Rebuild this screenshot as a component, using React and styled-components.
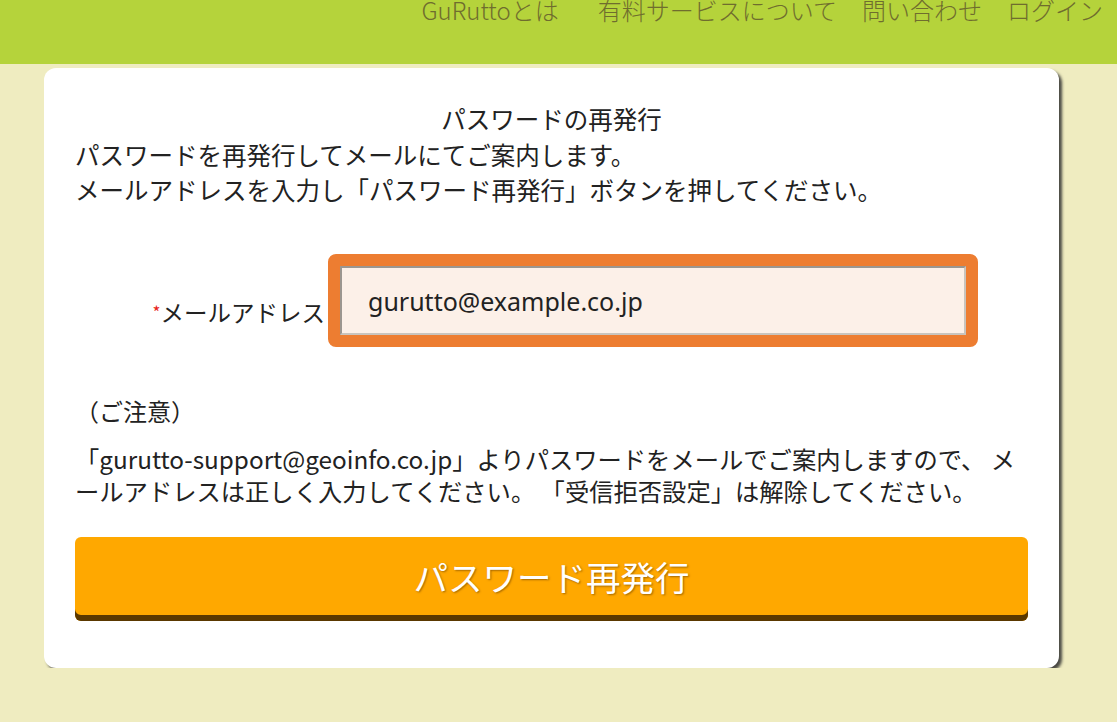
import styled, { createGlobalStyle } from 'styled-components'

const GlobalStyle = createGlobalStyle`
  html, body {
    margin: 0;
    padding: 0;
    background: #efecc0;
    font-family: 'Noto Sans CJK JP', 'Noto Sans', sans-serif;
    color: #222;
  }
`

const Header = styled.header`
  height: 64px;
  background: #b5d33b;
  display: flex;
  justify-content: flex-end;
  align-items: flex-start;
  padding-right: 14px;
  gap: 25px;
`

const NavItem = styled.a`
  font-size: 24px;
  line-height: 24px;
  margin-top: -2px;
  color: #6f6d2e;
  font-weight: 300;
  text-decoration: none;
  white-space: nowrap;
  &:first-child {
    margin-right: 14px;
  }
`

const Card = styled.main`
  width: 953px;
  margin: 4px 0 0 44px;
  padding: 33px 31px 47px;
  background: #fff;
  border-radius: 12px;
  box-shadow: 3px 3px 3px #4a4a44;
`

const Title = styled.h2`
  margin: 0;
  text-align: center;
  font-weight: normal;
  font-size: 24.5px;
  line-height: 36px;
`

const Lead = styled.p`
  margin: 0;
  font-size: 24.5px;
  line-height: 35px;
`

const FormRow = styled.div`
  display: flex;
  align-items: center;
  margin-top: 47px;
`

const Label = styled.label`
  width: 250px;
  padding-right: 3px;
  padding-top: 22px;
  text-align: right;
  font-size: 23.5px;
  line-height: 30px;
`

const Required = styled.span`
  color: #e8231b;
  font-size: 17px;
  vertical-align: 3px;
`

const InputFrame = styled.div`
  width: 626px;
  border: 12px solid #ed7d31;
  border-radius: 8px;
`

const Input = styled.input`
  box-sizing: border-box;
  display: block;
  width: 100%;
  height: 69px;
  padding: 0 0 0 26px;
  border: 2px solid #9b9690;
  border-right-color: #c9c4bd;
  border-bottom-color: #c9c4bd;
  background: #fcf0e8;
  font-family: 'Noto Sans', 'Noto Sans CJK JP', sans-serif;
  font-size: 25px;
  color: #222;
  outline: none;
`

const NoteTitle = styled.p`
  margin: 47px 0 0 0;
  font-size: 24px;
  line-height: 34px;
`

const NoteText = styled.p`
  margin: 15px 0 0 0;
  font-size: 24.3px;
  line-height: 32px;
`

const SubmitButton = styled.button`
  display: block;
  width: 100%;
  height: 84px;
  margin-top: 30px;
  padding: 0 0 6px;
  border: none;
  border-radius: 6px;
  background: #ffa800;
  box-shadow: inset 0 -6px 0 #5a3800;
  color: #fff;
  font-family: 'Noto Sans CJK JP', sans-serif;
  font-size: 34.5px;
  text-shadow: 1px 1px 2px rgba(90, 50, 0, 0.55);
  cursor: pointer;
`

export default function App() {
  return (
    <>
      <GlobalStyle />
      <Header>
        <NavItem href="#">GuRuttoとは</NavItem>
        <NavItem href="#">有料サービスについて</NavItem>
        <NavItem href="#">問い合わせ</NavItem>
        <NavItem href="#">ログイン</NavItem>
      </Header>
      <Card>
        <Title>パスワードの再発行</Title>
        <Lead>
          パスワードを再発行してメールにてご案内します。
          <br />
          メールアドレスを入力し「パスワード再発行」ボタンを押してください。
        </Lead>
        <FormRow>
          <Label htmlFor="mail">
            <Required>*</Required>メールアドレス
          </Label>
          <InputFrame>
            <Input id="mail" type="email" defaultValue="gurutto@example.co.jp" />
          </InputFrame>
        </FormRow>
        <NoteTitle>（ご注意）</NoteTitle>
        <NoteText>
          「gurutto-support@geoinfo.co.jp」よりパスワードをメールでご案内しますので、 メールアドレスは正しく入力してください。 「受信拒否設定」は解除してください。
        </NoteText>
        <SubmitButton type="button">パスワード再発行</SubmitButton>
      </Card>
    </>
  )
}
